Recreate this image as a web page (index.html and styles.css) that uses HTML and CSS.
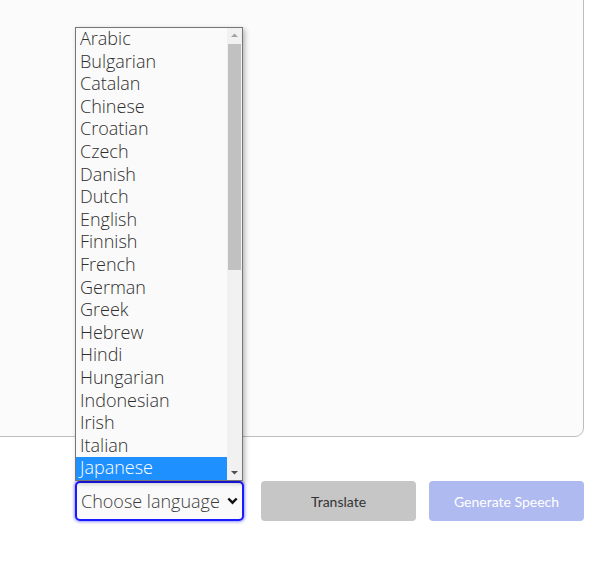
FILE: index.html
```html
<!DOCTYPE html>
<html lang="en">
<head>
<meta charset="utf-8">
<title>Translator</title>
<link rel="stylesheet" href="styles.css">
</head>
<body>
<main class="page">
  <div class="editor"></div>
  <div class="controls">
    <div class="lang">
      <div class="select">
        <span class="select-text">Choose language</span>
        <svg class="chev" width="11" height="8" viewBox="0 0 11 8"><path d="M1.3 1.5 L5.5 5.7 L9.7 1.5" fill="none" stroke="#111" stroke-width="2.4"/></svg>
      </div>
      <div class="popup">
        <ul class="options">
          <li>Arabic</li>
          <li>Bulgarian</li>
          <li>Catalan</li>
          <li>Chinese</li>
          <li>Croatian</li>
          <li>Czech</li>
          <li>Danish</li>
          <li>Dutch</li>
          <li>English</li>
          <li>Finnish</li>
          <li>French</li>
          <li>German</li>
          <li>Greek</li>
          <li>Hebrew</li>
          <li>Hindi</li>
          <li>Hungarian</li>
          <li>Indonesian</li>
          <li>Irish</li>
          <li>Italian</li>
          <li class="selected">Japanese</li>
        </ul>
        <div class="scrollbar">
          <svg class="arrow" width="15" height="15" viewBox="0 0 15 15"><path d="M4 9 L7.5 5.5 L11 9 Z" fill="#a3a3a3"/></svg>
          <div class="track"><div class="thumb"></div></div>
          <svg class="arrow" width="15" height="15" viewBox="0 0 15 15"><path d="M4 6 L7.5 9.5 L11 6 Z" fill="#505050"/></svg>
        </div>
      </div>
    </div>
    <button class="btn translate">Translate</button>
    <button class="btn speech">Generate Speech</button>
  </div>
</main>
</body>
</html>
```

FILE: styles.css
```css
* { box-sizing: border-box; }
html, body {
  margin: 0;
  padding: 0;
  background: #ffffff;
  overflow: hidden;
}
.page {
  width: 608px;
  height: 568px;
}
.editor {
  margin-left: -20px;
  margin-top: -20px;
  width: 604px;
  height: 457px;
  background: #fbfbfb;
  border: 1px solid #bdbdbd;
  border-radius: 0 0 9px 9px;
}
.controls {
  display: flex;
  align-items: stretch;
  margin-top: 44px;
  padding-left: 75px;
  height: 40px;
}
.lang {
  position: relative;
  width: 169px;
  margin-right: 17px;
}
.select {
  height: 40px;
  display: flex;
  align-items: center;
  justify-content: space-between;
  padding: 0 4px 0 4px;
  border: 2px solid #1a1aff;
  border-radius: 5px;
  background: #fafafa;
  box-shadow: 0 0 3px 1px rgba(60, 60, 255, 0.55);
  font-family: "Open Sans", sans-serif;
  font-weight: 300;
  font-size: 18px;
  color: #3c3c3c;
}
.select-text { white-space: nowrap; overflow: hidden; }
.chev { flex: none; margin-left: 3px; }
.popup {
  position: absolute;
  left: 0;
  bottom: 100%;
  width: 168px;
  height: 454px;
  display: flex;
  border: 1px solid #767676;
  background: #fafafa;
  box-shadow: 2px 2px 5px rgba(0, 0, 0, 0.28);
  z-index: 2;
}
.options {
  list-style: none;
  margin: 0;
  padding: 0;
  flex: 1;
  font-family: "Open Sans", sans-serif;
  font-weight: 300;
  font-size: 18px;
  color: #2e2e2e;
}
.options li {
  height: 22.6px;
  line-height: 21px;
  padding-left: 4px;
  white-space: nowrap;
}
.options li.selected {
  background: #1e90ff;
  color: #ffffff;
}
.scrollbar {
  width: 15px;
  display: flex;
  flex-direction: column;
  background: #f1f1f1;
}
.arrow { flex: none; display: block; }
.track {
  flex: 1;
  padding: 1px 1px 0 1px;
}
.thumb {
  height: 226px;
  background: #c1c1c1;
}
.btn {
  width: 155px;
  height: 40px;
  border: none;
  border-radius: 4px;
  font-family: Lato, sans-serif;
  font-size: 14px;
  padding: 0;
}
.translate {
  background: #c6c6c6;
  color: #333;
  margin-right: 13px;
}
.speech {
  background: #afbaf0;
  color: #ffffff;
}
```
